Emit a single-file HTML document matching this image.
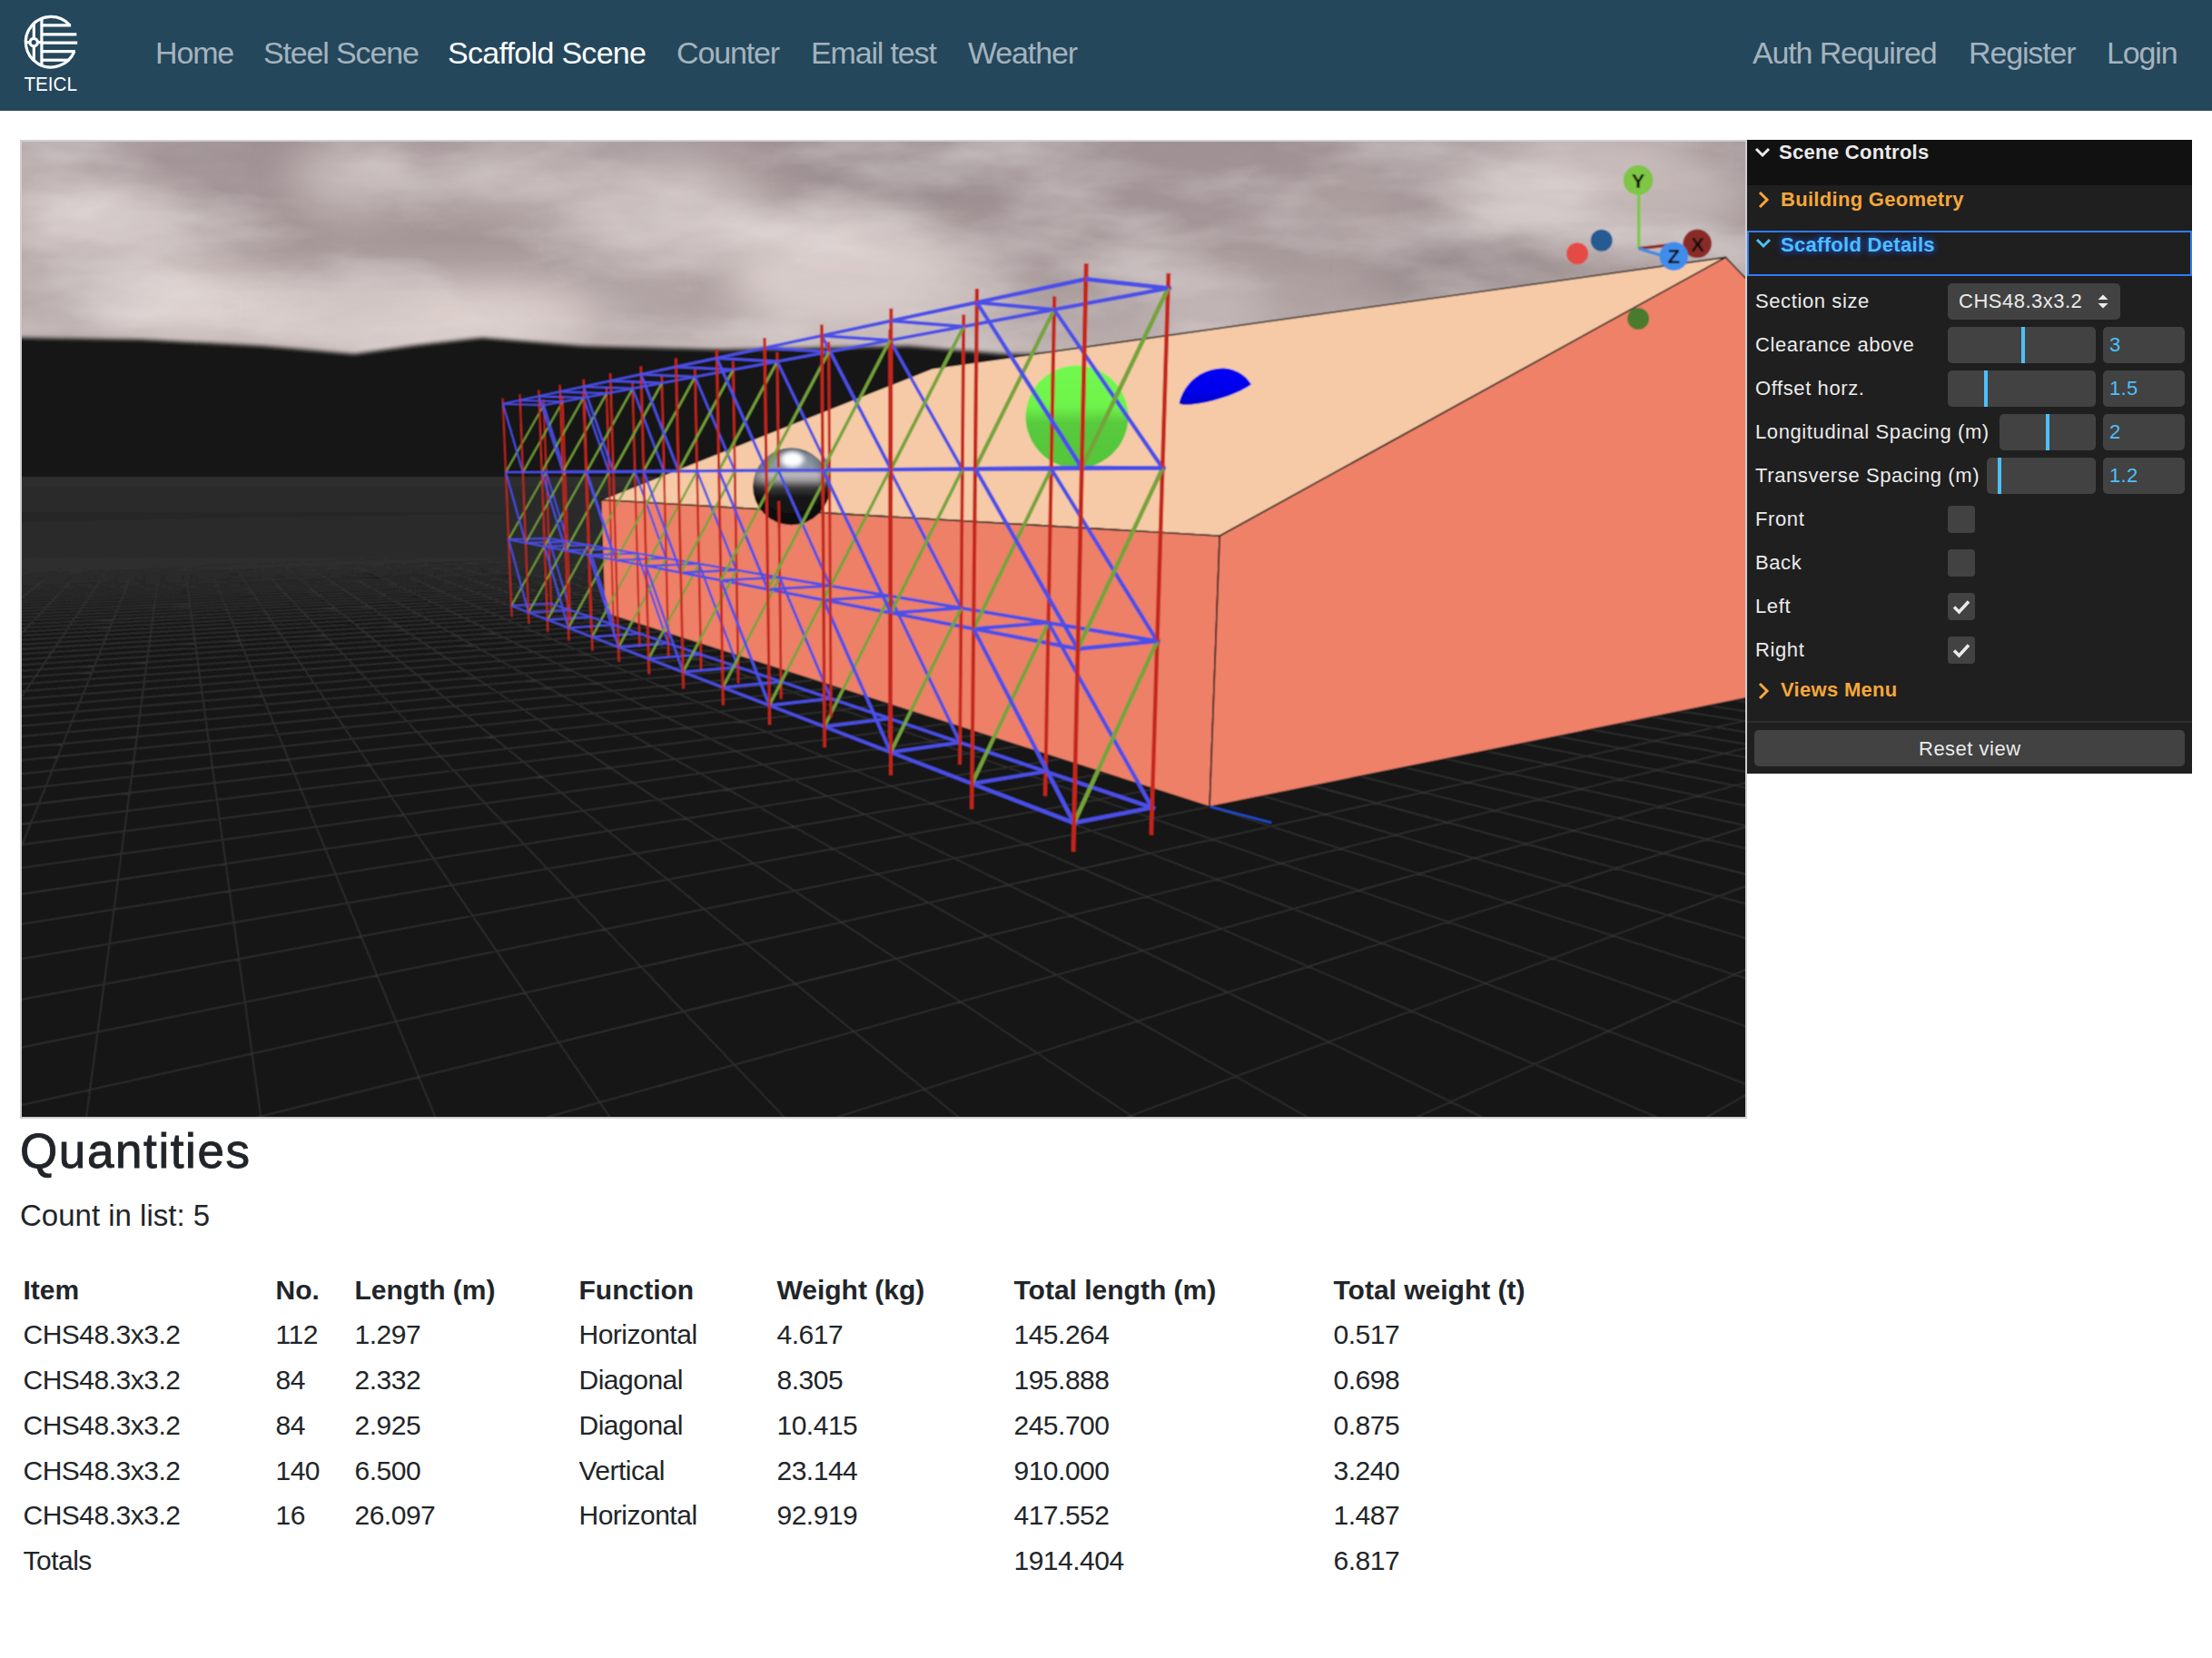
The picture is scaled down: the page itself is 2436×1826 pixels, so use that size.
<!DOCTYPE html>
<html><head><meta charset="utf-8">
<style>
html,body{margin:0;padding:0;background:#fff;}
body{width:2436px;height:1826px;position:relative;overflow:hidden;font-family:"Liberation Sans",sans-serif;}
.abs{position:absolute;white-space:nowrap;}
#hdr{position:absolute;left:0;top:0;width:2436px;height:122px;background:#24475c;}
.nav{position:absolute;top:41px;font-size:34px;line-height:34px;color:#a4b3bd;letter-spacing:-1.15px;}
.nav.act{color:#fff;}
#canvas{position:absolute;left:22px;top:154px;width:1898px;height:1074px;border:2px solid #cfcfcf;background:#161616;overflow:hidden;}
#gui{position:absolute;left:1924px;top:154px;width:490px;height:698px;background:#1f1f1f;color:#ebebeb;}
.gt{position:absolute;white-space:nowrap;font-size:22px;line-height:22px;}
.row{position:absolute;left:0;width:490px;height:40px;}
.lbl{position:absolute;left:8px;top:9px;font-size:22px;line-height:22px;color:#ebebeb;}
.wid{position:absolute;top:0;height:40px;background:#424242;border-radius:4px;}
.num{position:absolute;left:2316px;}
.chk{position:absolute;left:221px;width:30px;height:30px;background:#424242;border-radius:4px;}
h1{position:absolute;left:22px;top:1238px;margin:0;font-size:53px;line-height:60px;font-weight:normal;color:#212529;letter-spacing:1.6px;-webkit-text-stroke:0.9px #212529;}
#count{position:absolute;left:22px;top:1322px;font-size:33px;line-height:33px;color:#212529;}
.tc{position:absolute;font-size:30px;line-height:30px;color:#212529;white-space:nowrap;}
.th{font-weight:bold;}
</style></head><body>
<div id="hdr">
  <svg class="abs" style="left:0;top:0" width="120" height="120" viewBox="0 0 120 120">
<g stroke="#fff" stroke-width="3.2" fill="none">
<path d="M76.94,27.80 A27.8,27.8 0 1 0 81.84,56.70"/>
<line x1="45.9" y1="20.34" x2="45.9" y2="72.06"/>
<line x1="37.3" y1="26.22" x2="37.3" y2="41.5"/>
<line x1="37.3" y1="51.5" x2="37.3" y2="66.18"/>
<circle cx="37.2" cy="46.6" r="4.2"/>
<line x1="29.30" y1="46.6" x2="33" y2="46.6"/>
<line x1="41.4" y1="46.6" x2="45.9" y2="46.6"/>
<line x1="45.9" y1="27.8" x2="78.14" y2="27.8"/>
<line x1="45.9" y1="37.8" x2="84.3" y2="37.8"/>
<line x1="45.9" y1="47.2" x2="85.2" y2="47.2"/>
<line x1="45.9" y1="56.7" x2="82.84" y2="56.7"/>
<line x1="45.9" y1="66.2" x2="74.91" y2="66.2"/>
</g>
<text x="26.5" y="100" font-family="Liberation Sans, sans-serif" font-size="21.5" fill="#fff" textLength="58.5" lengthAdjust="spacingAndGlyphs">TEICL</text>
</svg>
  <div class="nav" style="left:171px">Home</div>
  <div class="nav" style="left:290px">Steel Scene</div>
  <div class="nav act" style="left:493px;letter-spacing:-0.7px">Scaffold Scene</div>
  <div class="nav" style="left:745px">Counter</div>
  <div class="nav" style="left:893px">Email test</div>
  <div class="nav" style="left:1066px">Weather</div>
  <div class="nav" style="left:1930px">Auth Required</div>
  <div class="nav" style="left:2168px">Register</div>
  <div class="nav" style="left:2320px">Login</div>
</div>
<div id="canvas">
<svg width="1898" height="1074" viewBox="24 156 1898 1074" style="position:absolute;left:0;top:0;display:block">
<defs>
<linearGradient id="skyg" x1="0" y1="0" x2="0" y2="1">
 <stop offset="0" stop-color="#9f9193"/>
 <stop offset="0.4" stop-color="#a99b9c"/>
 <stop offset="0.62" stop-color="#bcafae"/>
 <stop offset="1" stop-color="#cdc0bd"/>
</linearGradient>
<linearGradient id="hband" x1="0" y1="0" x2="0" y2="1">
 <stop offset="0" stop-color="#2e2e2e" stop-opacity="1"/>
 <stop offset="0.3" stop-color="#2b2b2b" stop-opacity="0.9"/>
 <stop offset="0.65" stop-color="#262626" stop-opacity="0.45"/>
 <stop offset="1" stop-color="#1e1e1e" stop-opacity="0"/>
</linearGradient>
<filter id="blur8" x="-50%" y="-50%" width="200%" height="200%"><feGaussianBlur stdDeviation="14"/></filter>
<filter id="blur20" x="-50%" y="-50%" width="200%" height="200%"><feGaussianBlur stdDeviation="24"/></filter>
<filter id="blur2" x="-10%" y="-50%" width="120%" height="200%"><feGaussianBlur stdDeviation="2.2"/></filter>
<filter id="cloudtex" x="24" y="156" width="1898" height="380" filterUnits="userSpaceOnUse">
 <feTurbulence type="fractalNoise" baseFrequency="0.0045 0.014" numOctaves="5" seed="7" result="n"/>
 <feColorMatrix in="n" type="matrix" values="0 0 0 0 0.90  0 0 0 0 0.85  0 0 0 0 0.84  2.6 0 0 0 -1.05" result="c"/>
 <feComposite in="c" in2="SourceGraphic" operator="in"/>
</filter>
<filter id="darktex" x="24" y="156" width="1898" height="380" filterUnits="userSpaceOnUse">
 <feTurbulence type="fractalNoise" baseFrequency="0.006 0.02" numOctaves="4" seed="3" result="n"/>
 <feColorMatrix in="n" type="matrix" values="0 0 0 0 0.55  0 0 0 0 0.49  0 0 0 0 0.50  2.4 0 0 0 -1.2" result="c"/>
 <feComposite in="c" in2="SourceGraphic" operator="in"/>
</filter>
<clipPath id="cv"><rect x="24" y="156" width="1898" height="1074"/></clipPath>
</defs>
<defs><clipPath id="floorclip"><rect x="24" y="525" width="1898" height="705"/></clipPath></defs>
<defs><filter id="soft" x="24" y="156" width="1898" height="1074" filterUnits="userSpaceOnUse"><feConvolveMatrix order="3" kernelMatrix="1 2 1 2 4 2 1 2 1" divisor="16" preserveAlpha="true"/></filter></defs>
<g filter="url(#soft)">
<rect x="24" y="156" width="1898" height="380" fill="url(#skyg)"/>
<ellipse cx="100" cy="240" rx="110" ry="45" fill="#d8cccb" opacity="0.85" filter="url(#blur20)"/>
<ellipse cx="215" cy="330" rx="120" ry="50" fill="#ddd1cf" opacity="0.9" filter="url(#blur20)"/>
<ellipse cx="395" cy="195" rx="75" ry="38" fill="#d3c7c6" opacity="0.8" filter="url(#blur20)"/>
<ellipse cx="570" cy="200" rx="95" ry="30" fill="#d3c7c6" opacity="0.75" filter="url(#blur20)"/>
<ellipse cx="480" cy="345" rx="190" ry="38" fill="#e2d6d3" opacity="0.9" filter="url(#blur20)"/>
<ellipse cx="740" cy="235" rx="110" ry="60" fill="#d2c6c5" opacity="0.8" filter="url(#blur20)"/>
<ellipse cx="930" cy="300" rx="130" ry="70" fill="#ddd1cf" opacity="0.9" filter="url(#blur20)"/>
<ellipse cx="1060" cy="320" rx="60" ry="40" fill="#d6cac8" opacity="0.7" filter="url(#blur20)"/>
<ellipse cx="1330" cy="335" rx="70" ry="30" fill="#cfc3c2" opacity="0.75" filter="url(#blur20)"/>
<ellipse cx="1760" cy="215" rx="170" ry="55" fill="#c9bdbc" opacity="0.8" filter="url(#blur20)"/>
<ellipse cx="1770" cy="170" rx="100" ry="20" fill="#dacdcc" opacity="0.8" filter="url(#blur20)"/>
<ellipse cx="1480" cy="230" rx="70" ry="40" fill="#b6a9a9" opacity="0.5" filter="url(#blur20)"/>
<ellipse cx="285" cy="258" rx="65" ry="30" fill="#9f9090" opacity="0.55" filter="url(#blur20)"/>
<ellipse cx="480" cy="262" rx="80" ry="28" fill="#a39494" opacity="0.5" filter="url(#blur20)"/>
<ellipse cx="1000" cy="190" rx="110" ry="28" fill="#8b7f81" opacity="0.6" filter="url(#blur20)"/>
<ellipse cx="1620" cy="300" rx="110" ry="35" fill="#8c8082" opacity="0.55" filter="url(#blur20)"/>
<ellipse cx="1180" cy="270" rx="110" ry="45" fill="#a19394" opacity="0.45" filter="url(#blur20)"/>
<rect x="24" y="156" width="1898" height="240" fill="#fff" filter="url(#cloudtex)" opacity="0.42"/>
<rect x="24" y="156" width="1898" height="240" fill="#fff" filter="url(#darktex)" opacity="0.3"/>
<path d="M -30,371 L 24,372 L 156,374 L 289,381 L 390,390 L 460,380 L 531,372 L 642,381 L 796,385 L 1000,381 L 1106,390 L 1300,392 L 1922,395 L 1980,396 L 1980,526 L -30,526 Z" fill="#151515" filter="url(#blur2)"/>
<rect x="24" y="400" width="1898" height="126" fill="#151515"/>
<rect x="24" y="525" width="1898" height="705" fill="#161616"/>
<g clip-path="url(#floorclip)"><path d="M-204146.8 7457.5L-2742.6 622.4M-202263.3 7457.5L-2689.2 621.5M-200379.9 7457.5L-2636.7 620.6M-198496.4 7457.5L-2585.2 619.8M-196613.0 7457.5L-2534.6 618.9M-194729.5 7457.5L-2484.9 618.1M-192846.1 7457.5L-2436.0 617.2M-190962.6 7457.5L-2388.0 616.4M-189079.2 7457.5L-2340.8 615.6M-187195.7 7457.5L-2294.4 614.8M-185312.3 7457.5L-2248.8 614.1M-183428.8 7457.5L-2203.9 613.3M-181545.4 7457.5L-2159.8 612.6M-179661.9 7457.5L-2116.4 611.8M-177778.4 7457.5L-2073.8 611.1M-175895.0 7457.5L-2031.8 610.4M-174011.5 7457.5L-1990.4 609.7M-172128.1 7457.5L-1949.8 609.0M-170244.6 7457.5L-1909.7 608.3M-168361.2 7457.5L-1870.3 607.7M-166477.7 7457.5L-1831.5 607.0M-164594.3 7457.5L-1793.3 606.4M-162710.8 7457.5L-1755.7 605.7M-160827.4 7457.5L-1718.7 605.1M-158943.9 7457.5L-1682.2 604.5M-157060.5 7457.5L-1646.2 603.9M-155177.0 7457.5L-1610.8 603.3M-153293.5 7457.5L-1575.9 602.7M-151410.1 7457.5L-1541.5 602.1M-149526.6 7457.5L-1507.7 601.5M-147643.2 7457.5L-1474.3 601.0M247409.9 7457.5L213678.7 6499.9M-145759.7 7457.5L-1441.3 600.4M244280.7 7457.5L111661.8 3643.8M-143876.3 7457.5L-1408.9 599.9M241151.5 7457.5L75617.9 2634.7M-141992.8 7457.5L-1376.9 599.3M238022.3 7457.5L57187.8 2118.7M-140109.4 7457.5L-1345.3 598.8M234893.1 7457.5L45995.6 1805.4M-138225.9 7457.5L-1314.2 598.3M231763.8 7457.5L38477.3 1594.9M-136342.5 7457.5L-1283.5 597.7M228634.6 7457.5L33079.1 1443.7M-134459.0 7457.5L-1253.3 597.2M225505.4 7457.5L29014.9 1330.0M-132575.6 7457.5L-1223.4 596.7M222376.2 7457.5L25844.7 1241.2M-130692.1 7457.5L-1194.0 596.2M219247.0 7457.5L23302.8 1170.0M-128808.7 7457.5L-1164.9 595.7M216117.8 7457.5L21219.1 1111.7M-126925.2 7457.5L-1136.3 595.2M212988.5 7457.5L19480.0 1063.0M-125041.7 7457.5L-1108.0 594.8M209859.3 7457.5L18006.6 1021.8M-123158.3 7457.5L-1080.1 594.3M206730.1 7457.5L16742.3 986.4M-121274.8 7457.5L-1052.5 593.8M203600.9 7457.5L15645.6 955.7M-119391.4 7457.5L-1025.3 593.4M200471.7 7457.5L14685.1 928.8M-117507.9 7457.5L-998.5 592.9M197342.5 7457.5L13837.0 905.0M-115624.5 7457.5L-972.0 592.5M194213.2 7457.5L13082.7 883.9M-113741.0 7457.5L-945.8 592.0M191084.0 7457.5L12407.4 865.0M-111857.6 7457.5L-920.0 591.6M187954.8 7457.5L11799.3 848.0M-109974.1 7457.5L-894.5 591.1M184825.6 7457.5L11248.9 832.6M-108090.7 7457.5L-869.3 590.7M181696.4 7457.5L10748.3 818.5M-106207.2 7457.5L-844.4 590.3M178567.2 7457.5L10291.0 805.7M-104323.8 7457.5L-819.9 589.9M175438.0 7457.5L9871.8 794.0M-102440.3 7457.5L-795.6 589.5M172308.7 7457.5L9485.9 783.2M-100556.8 7457.5L-771.6 589.1M169179.5 7457.5L9129.6 773.2M-98673.4 7457.5L-748.0 588.7M166050.3 7457.5L8799.6 764.0M-96789.9 7457.5L-724.6 588.3M162921.1 7457.5L8493.1 755.4M-94906.5 7457.5L-701.5 587.9M159791.9 7457.5L8207.7 747.4M-93023.0 7457.5L-678.6 587.5M156662.7 7457.5L7941.2 740.0M-91139.6 7457.5L-656.1 587.1M153533.4 7457.5L7691.9 733.0M-89256.1 7457.5L-633.8 586.7M150404.2 7457.5L7458.1 726.4M-87372.7 7457.5L-611.7 586.4M147275.0 7457.5L7238.5 720.3M-85489.2 7457.5L-589.9 586.0M144145.8 7457.5L7031.7 714.5M-83605.8 7457.5L-568.4 585.6M141016.6 7457.5L6836.7 709.0M-81722.3 7457.5L-547.1 585.3M137887.4 7457.5L6652.5 703.9M-79838.9 7457.5L-526.1 584.9M134758.1 7457.5L6478.3 699.0M-77955.4 7457.5L-505.3 584.6M131628.9 7457.5L6313.2 694.4M-76071.9 7457.5L-484.7 584.2M128499.7 7457.5L6156.6 690.0M-74188.5 7457.5L-464.4 583.9M125370.5 7457.5L6007.7 685.8M-72305.0 7457.5L-444.3 583.5M122241.3 7457.5L5866.1 681.9M-70421.6 7457.5L-424.4 583.2M119112.1 7457.5L5731.3 678.1M-68538.1 7457.5L-404.7 582.9M115982.8 7457.5L5602.6 674.5M-66654.7 7457.5L-385.3 582.5M112853.6 7457.5L5479.9 671.0M-64771.2 7457.5L-366.0 582.2M109724.4 7457.5L5362.5 667.8M-62887.8 7457.5L-347.0 581.9M106595.2 7457.5L5250.3 664.6M-61004.3 7457.5L-328.2 581.6M103466.0 7457.5L5142.8 661.6M-59120.9 7457.5L-309.5 581.2M100336.8 7457.5L5039.8 658.7M-57237.4 7457.5L-291.1 580.9M97207.6 7457.5L4941.0 656.0M-55354.0 7457.5L-272.9 580.6M94078.3 7457.5L4846.2 653.3M-53470.5 7457.5L-254.9 580.3M90949.1 7457.5L4755.0 650.8M-51587.1 7457.5L-237.0 580.0M87819.9 7457.5L4667.4 648.3M-49703.6 7457.5L-219.4 579.7M84690.7 7457.5L4583.0 645.9M-47820.1 7457.5L-201.9 579.4M81561.5 7457.5L4501.8 643.7M-45936.7 7457.5L-184.6 579.1M78432.3 7457.5L4423.5 641.5M-44053.2 7457.5L-167.5 578.8M75303.0 7457.5L4348.0 639.4M-42169.8 7457.5L-150.5 578.6M72173.8 7457.5L4275.2 637.3M-40286.3 7457.5L-133.8 578.3M69044.6 7457.5L4204.9 635.3M-38402.9 7457.5L-117.2 578.0M65915.4 7457.5L4136.9 633.4M-36519.4 7457.5L-100.8 577.7M62786.2 7457.5L4071.2 631.6M-34636.0 7457.5L-84.5 577.4M59657.0 7457.5L4007.7 629.8M-32752.5 7457.5L-68.4 577.2M56527.7 7457.5L3946.2 628.1M-30869.1 7457.5L-52.5 576.9M53398.5 7457.5L3886.6 626.4M-28985.6 7457.5L-36.7 576.6M50269.3 7457.5L3829.0 624.8M-27102.2 7457.5L-21.0 576.4M47140.1 7457.5L3773.0 623.3M-25218.7 7457.5L-5.6 576.1M44010.9 7457.5L3718.8 621.7M-23335.2 7457.5L9.8 575.8M40881.7 7457.5L3666.2 620.3M-21451.8 7457.5L24.9 575.6M37752.4 7457.5L3615.1 618.8M-19568.3 7457.5L40.0 575.3M34623.2 7457.5L3565.6 617.5M-17684.9 7457.5L54.8 575.1M31494.0 7457.5L3517.4 616.1M-15801.4 7457.5L69.6 574.8M28364.8 7457.5L3470.6 614.8M-13918.0 7457.5L84.2 574.6M25235.6 7457.5L3425.1 613.5M-12034.5 7457.5L98.6 574.3M22106.4 7457.5L3380.8 612.3M-10151.1 7457.5L113.0 574.1M18977.1 7457.5L3337.7 611.1M-8267.6 7457.5L127.2 573.9M15847.9 7457.5L3295.8 609.9M-6384.2 7457.5L141.2 573.6M12718.7 7457.5L3255.0 608.8M-4500.7 7457.5L155.1 573.4M9589.5 7457.5L3215.2 607.6M-2617.3 7457.5L168.9 573.1M6460.3 7457.5L3176.5 606.6M-733.8 7457.5L182.6 572.9M3331.1 7457.5L3138.7 605.5M1149.7 7457.5L196.2 572.7M201.9 7457.5L3101.9 604.5M3033.1 7457.5L209.6 572.5M-2927.4 7457.5L3065.9 603.5M4916.6 7457.5L222.9 572.2M-6056.6 7457.5L3030.9 602.5M6800.0 7457.5L236.1 572.0M-9185.8 7457.5L2996.7 601.5M8683.5 7457.5L249.1 571.8M-12315.0 7457.5L2963.3 600.6M10566.9 7457.5L262.1 571.6M-15444.2 7457.5L2930.7 599.7M12450.4 7457.5L274.9 571.4M-18573.4 7457.5L2898.9 598.8M14333.8 7457.5L287.6 571.1M-21702.7 7457.5L2867.8 597.9M16217.3 7457.5L300.2 570.9M-24831.9 7457.5L2837.4 597.1M18100.7 7457.5L312.7 570.7M-27961.1 7457.5L2807.6 596.2M19984.2 7457.5L325.1 570.5M-31090.3 7457.5L2778.6 595.4M21867.6 7457.5L337.4 570.3M-34219.5 7457.5L2750.1 594.6M23751.1 7457.5L349.5 570.1M-37348.7 7457.5L2722.3 593.8M25634.5 7457.5L361.6 569.9M-40478.0 7457.5L2695.1 593.1M27518.0 7457.5L373.5 569.7M-43607.2 7457.5L2668.5 592.3M29401.5 7457.5L385.4 569.5M-46736.4 7457.5L2642.4 591.6M31284.9 7457.5L397.2 569.3M-49865.6 7457.5L2616.9 590.9M33168.4 7457.5L408.8 569.1M-52994.8 7457.5L2591.9 590.2M35051.8 7457.5L420.4 568.9M-56124.0 7457.5L2567.4 589.5M36935.3 7457.5L431.8 568.7M-59253.3 7457.5L2543.4 588.8M38818.7 7457.5L443.2 568.5M-62382.5 7457.5L2519.9 588.2M40702.2 7457.5L454.4 568.3M-65511.7 7457.5L2496.8 587.5M42585.6 7457.5L465.6 568.1M-68640.9 7457.5L2474.2 586.9M44469.1 7457.5L476.7 567.9M-71770.1 7457.5L2452.1 586.3M46352.5 7457.5L487.7 567.8M-74899.3 7457.5L2430.3 585.7M48236.0 7457.5L498.6 567.6M-78028.5 7457.5L2409.0 585.1M50119.4 7457.5L509.4 567.4M-81157.8 7457.5L2388.1 584.5M52002.9 7457.5L520.1 567.2M-84287.0 7457.5L2367.5 583.9M53886.4 7457.5L530.7 567.0M-87416.2 7457.5L2347.4 583.3M55769.8 7457.5L541.3 566.8M-90545.4 7457.5L2327.6 582.8M57653.3 7457.5L551.8 566.7M-93674.6 7457.5L2308.2 582.2M59536.7 7457.5L562.1 566.5M-96803.8 7457.5L2289.1 581.7M61420.2 7457.5L572.4 566.3M-99933.1 7457.5L2270.4 581.2M63303.6 7457.5L582.6 566.1M-103062.3 7457.5L2252.0 580.7M65187.1 7457.5L592.8 566.0M-106191.5 7457.5L2233.9 580.2M67070.5 7457.5L602.8 565.8M-109320.7 7457.5L2216.1 579.7M68954.0 7457.5L612.8 565.6M-112449.9 7457.5L2198.7 579.2M70837.4 7457.5L622.7 565.5M-115579.1 7457.5L2181.5 578.7M72720.9 7457.5L632.5 565.3M-118708.4 7457.5L2164.6 578.2M74604.3 7457.5L642.2 565.1M-121837.6 7457.5L2148.1 577.8M76487.8 7457.5L651.9 565.0M-124966.8 7457.5L2131.7 577.3M78371.3 7457.5L661.5 564.8M-128096.0 7457.5L2115.7 576.9M80254.7 7457.5L671.0 564.7M-131225.2 7457.5L2099.9 576.4M82138.2 7457.5L680.5 564.5M-134354.4 7457.5L2084.4 576.0M84021.6 7457.5L689.8 564.3M-137483.7 7457.5L2069.1 575.6M85905.1 7457.5L699.1 564.2M-140612.9 7457.5L2054.1 575.1M87788.5 7457.5L708.4 564.0M-143742.1 7457.5L2039.3 574.7M89672.0 7457.5L717.5 563.9M-146871.3 7457.5L2024.8 574.3M91555.4 7457.5L726.6 563.7M-150000.5 7457.5L2010.4 573.9M93438.9 7457.5L735.6 563.6M-153129.7 7457.5L1996.3 573.5M95322.3 7457.5L744.6 563.4M-156259.0 7457.5L1982.4 573.1M97205.8 7457.5L753.5 563.3M-159388.2 7457.5L1968.7 572.7M99089.2 7457.5L762.3 563.1M-162517.4 7457.5L1955.3 572.4M100972.7 7457.5L771.1 563.0M-165646.6 7457.5L1942.0 572.0M102856.1 7457.5L779.8 562.8M-168775.8 7457.5L1928.9 571.6M104739.6 7457.5L788.4 562.7M-171905.0 7457.5L1916.1 571.3M106623.1 7457.5L797.0 562.5M-175034.2 7457.5L1903.4 570.9M108506.5 7457.5L805.5 562.4M-178163.5 7457.5L1890.9 570.6M110390.0 7457.5L813.9 562.2M-181292.7 7457.5L1878.5 570.2M112273.4 7457.5L822.3 562.1M-184421.9 7457.5L1866.4 569.9M114156.9 7457.5L830.6 561.9M-187551.1 7457.5L1854.4 569.5M116040.3 7457.5L838.9 561.8M-190680.3 7457.5L1842.6 569.2M117923.8 7457.5L847.1 561.7M-193809.5 7457.5L1831.0 568.9M119807.2 7457.5L855.2 561.5M-196938.8 7457.5L1819.5 568.6M121690.7 7457.5L863.3 561.4M-200068.0 7457.5L1808.2 568.3M123574.1 7457.5L871.3 561.3M-203197.2 7457.5L1797.0 567.9M125457.6 7457.5L879.3 561.1M-117273.7 4509.3L1786.0 567.6M127341.0 7457.5L887.2 561.0M-72752.1 2998.4L1775.2 567.3M129224.5 7457.5L895.1 560.9M-52704.1 2318.0L1764.5 567.0M131108.0 7457.5L902.9 560.7M-41300.6 1931.0L1753.9 566.7M132991.4 7457.5L910.7 560.6M-33942.0 1681.2L1743.5 566.4M134874.9 7457.5L918.4 560.5M-28800.5 1506.8L1733.2 566.2M136758.3 7457.5L926.0 560.3M-25005.2 1378.0L1723.0 565.9M138641.8 7457.5L933.6 560.2M-22088.6 1279.0L1713.0 565.6M140525.2 7457.5L941.1 560.1M-19777.2 1200.5L1703.1 565.3M142408.7 7457.5L948.6 560.0M-17900.4 1136.8L1693.4 565.0M144292.1 7457.5L956.1 559.8M-16346.1 1084.1L1683.7 564.8M146175.6 7457.5L963.5 559.7M-15037.7 1039.7L1674.2 564.5M148059.0 7457.5L970.8 559.6M-13921.2 1001.8L1664.8 564.2M149942.5 7457.5L978.1 559.5M-12957.3 969.1L1655.6 564.0M151825.9 7457.5L985.3 559.3M-12116.6 940.6L1646.4 563.7M153709.4 7457.5L992.5 559.2M-11377.0 915.5L1637.4 563.5M155592.9 7457.5L999.7 559.1M-10721.3 893.2L1628.4 563.2M157476.3 7457.5L1006.8 559.0M-10135.9 873.3L1619.6 563.0M159359.8 7457.5L1013.8 558.8M-9610.1 855.5L1610.9 562.7M161243.2 7457.5L1020.8 558.7M-9135.3 839.4L1602.3 562.5M163126.7 7457.5L1027.8 558.6M-8704.4 824.8L1593.8 562.2M165010.1 7457.5L1034.7 558.5M-8311.5 811.4L1585.4 562.0M166893.6 7457.5L1041.6 558.4M-7951.9 799.2L1577.1 561.8M168777.0 7457.5L1048.4 558.3M-7621.5 788.0L1568.8 561.5M170660.5 7457.5L1055.2 558.1M-7316.8 777.7L1560.7 561.3M172543.9 7457.5L1061.9 558.0M-7035.1 768.1L1552.7 561.1M174427.4 7457.5L1068.6 557.9M-6773.7 759.2L1544.8 560.9M176310.8 7457.5L1075.2 557.8M-6530.5 751.0L1537.0 560.7M178194.3 7457.5L1081.8 557.7M-6303.8 743.3L1529.2 560.4M180077.7 7457.5L1088.4 557.6M-6091.9 736.1L1521.6 560.2M181961.2 7457.5L1094.9 557.5M-5893.3 729.4L1514.0 560.0M183844.7 7457.5L1101.4 557.4M-5707.0 723.0L1506.5 559.8M185728.1 7457.5L1107.8 557.3M-5531.7 717.1L1499.1 559.6M187611.6 7457.5L1114.2 557.1M-5366.5 711.5L1491.8 559.4M189495.0 7457.5L1120.6 557.0M-5210.6 706.2L1484.6 559.2M191378.5 7457.5L1126.9 556.9M-5063.3 701.2L1477.4 559.0M193261.9 7457.5L1133.2 556.8M-4923.7 696.4L1470.4 558.8M195145.4 7457.5L1139.4 556.7M-4791.4 692.0L1463.4 558.6M197028.8 7457.5L1145.6 556.6M-4665.7 687.7L1456.4 558.4M198912.3 7457.5L1151.8 556.5M-4546.3 683.6L1449.6 558.2M200795.7 7457.5L1157.9 556.4M-4432.5 679.8L1442.8 558.0M202679.2 7457.5L1164.0 556.3M-4324.1 676.1L1436.1 557.8M204562.6 7457.5L1170.1 556.2M-4220.7 672.6L1429.5 557.6M206446.1 7457.5L1176.1 556.1M-4121.9 669.2L1422.9 557.5M208329.6 7457.5L1182.0 556.0M-4027.4 666.0L1416.4 557.3M210213.0 7457.5L1188.0 555.9M-3937.0 663.0L1410.0 557.1M212096.5 7457.5L1193.9 555.8M-3850.4 660.0L1403.7 556.9M213979.9 7457.5L1199.8 555.7M-3767.4 657.2L1397.4 556.7M215863.4 7457.5L1205.6 555.6M-3687.7 654.5L1391.2 556.6M217746.8 7457.5L1211.4 555.5M-3611.1 651.9L1385.0 556.4M219630.3 7457.5L1217.1 555.4M-3537.5 649.4L1378.9 556.2M221513.7 7457.5L1222.9 555.3M-3466.7 647.0L1372.9 556.1M223397.2 7457.5L1228.6 555.2M-3398.5 644.7L1366.9 555.9M225280.6 7457.5L1234.2 555.1M-3332.9 642.5L1361.0 555.7M227164.1 7457.5L1239.9 555.0M-3269.6 640.3L1355.1 555.6M229047.5 7457.5L1245.4 554.9M-3208.5 638.2L1349.3 555.4M230931.0 7457.5L1251.0 554.8M-3149.5 636.2L1343.6 555.2M232814.4 7457.5L1256.5 554.7M-3092.6 634.3L1337.9 555.1M234697.9 7457.5L1262.0 554.6M-3037.6 632.4L1332.3 554.9M236581.4 7457.5L1267.5 554.6M-2984.4 630.6L1326.7 554.8M238464.8 7457.5L1272.9 554.5M-2932.9 628.9L1321.2 554.6M240348.3 7457.5L1278.3 554.4M-2883.0 627.2L1315.7 554.5M242231.7 7457.5L1283.7 554.3M-2834.8 625.6L1310.3 554.3M244115.2 7457.5L1289.0 554.2M-2788.0 624.0L1304.9 554.2M245998.6 7457.5L1294.3 554.1M-2742.6 622.4L1299.6 554.0M247882.1 7457.5L1299.6 554.0" stroke="#313131" stroke-width="1.5" fill="none"/></g>
<rect x="24" y="525" width="1898" height="125" fill="url(#hband)"/>
<polygon points="1343.2,590.2 661.7,550.5 1026.2,405.8 1900.5,283.4" fill="#f6caa6" stroke="#1e1e1e" stroke-width="1.6" stroke-linejoin="round"/>
<polygon points="1332.1,888.5 665.6,675.3 661.7,550.5 1343.2,590.2" fill="#ee8068" stroke="#1e1e1e" stroke-width="1.6"/>
<polygon points="1332.1,888.5 1343.2,590.2 1900.5,283.4 2162.9,559.5 2143.2,724.2" fill="#ef8169" stroke="#1e1e1e" stroke-width="1.6"/>
<defs>
<linearGradient id="silverg" x1="0" y1="0" x2="0" y2="1">
 <stop offset="0" stop-color="#6a7383"/>
 <stop offset="0.1" stop-color="#97a1b1"/>
 <stop offset="0.27" stop-color="#8a94a4"/>
 <stop offset="0.35" stop-color="#bcb9bc"/>
 <stop offset="0.42" stop-color="#9a989a"/>
 <stop offset="0.52" stop-color="#3a3a3a"/>
 <stop offset="0.64" stop-color="#171717"/>
 <stop offset="1" stop-color="#111111"/>
</linearGradient>
<radialGradient id="silverr" cx="0.5" cy="0.45" r="0.55">
 <stop offset="0.6" stop-color="#000" stop-opacity="0"/>
 <stop offset="1" stop-color="#000" stop-opacity="0.45"/>
</radialGradient>
<linearGradient id="greeng" x1="0" y1="0" x2="0" y2="1">
 <stop offset="0" stop-color="#72f94e"/>
 <stop offset="0.4" stop-color="#6ef34b"/>
 <stop offset="0.56" stop-color="#58ca3c"/>
 <stop offset="1" stop-color="#56c53a"/>
</linearGradient>
<linearGradient id="blueg" x1="0" y1="0" x2="0" y2="1">
 <stop offset="0" stop-color="#0000f4"/>
 <stop offset="0.6" stop-color="#0000ee"/>
 <stop offset="1" stop-color="#0000c8"/>
</linearGradient>
<filter id="blur1" x="-50%" y="-50%" width="200%" height="200%"><feGaussianBlur stdDeviation="2.5"/></filter>
</defs>
<circle cx="1186" cy="459" r="56.5" fill="url(#greeng)"/>
<path d="M1298.5,444 C1304,421 1324,405.5 1347,405.5 C1361,406 1372,413 1378,423.5 C1366,432 1342,441 1320,444.5 C1309,446 1300,446.5 1298.5,444 Z" fill="url(#blueg)"/>
<path d="M1332.6,888.3 L1400,906" stroke="#2050e0" stroke-width="2" fill="none"/>

<polygon points="563.2,668.1 607.0,665.6 606.9,663.9 563.1,666.3" fill="#4b4fe6"/>
<polygon points="608.3,676.7 599.5,440.1 597.7,440.2 606.6,676.8" fill="#c4261c"/>
<polygon points="563.9,667.6 605.1,593.4 603.5,592.5 562.4,666.8" fill="#74a33b"/>
<polygon points="560.1,595.1 604.3,593.8 604.3,592.1 560.1,593.3" fill="#4b4fe6"/>
<polygon points="560.9,594.6 602.3,520.6 600.8,519.7 559.3,593.8" fill="#74a33b"/>
<polygon points="557.0,521.0 601.6,521.0 601.6,519.3 557.0,519.2" fill="#4b4fe6"/>
<polygon points="557.8,520.5 599.6,446.6 598.1,445.8 556.2,519.6" fill="#74a33b"/>
<polygon points="603.5,593.2 626.8,672.0 628.5,671.5 605.1,592.7" fill="#4b4fe6"/>
<polygon points="564.5,679.4 554.5,438.6 552.7,438.7 562.8,679.4" fill="#c4261c"/>
<polygon points="553.8,445.8 598.8,447.1 598.9,445.3 553.9,444.0" fill="#4b4fe6"/>
<polygon points="600.8,520.4 624.1,596.7 625.9,596.2 602.4,519.9" fill="#4b4fe6"/>
<polygon points="598.0,446.5 621.4,520.3 623.2,519.7 599.7,445.9" fill="#4b4fe6"/>
<polygon points="559.3,594.4 581.1,674.7 582.9,674.2 561.0,594.0" fill="#4b4fe6"/>
<polygon points="556.2,520.3 578.0,598.1 579.8,597.6 557.9,519.8" fill="#4b4fe6"/>
<polygon points="582.0,675.4 627.7,672.7 627.6,670.9 581.9,673.6" fill="#4b4fe6"/>
<polygon points="629.0,684.3 620.3,435.9 618.4,436.0 627.2,684.4" fill="#c4261c"/>
<polygon points="553.0,445.1 574.9,520.2 576.7,519.7 554.7,444.6" fill="#4b4fe6"/>
<polygon points="582.8,674.9 625.8,596.9 624.2,596.0 581.2,674.0" fill="#74a33b"/>
<polygon points="579.0,598.7 625.0,597.4 625.0,595.6 578.9,596.9" fill="#4b4fe6"/>
<polygon points="579.7,598.3 623.1,520.4 621.5,519.5 578.1,597.4" fill="#74a33b"/>
<polygon points="575.8,520.9 622.3,520.9 622.3,519.1 575.8,519.0" fill="#4b4fe6"/>
<polygon points="576.7,520.4 620.4,442.8 618.8,441.9 575.0,519.5" fill="#74a33b"/>
<polygon points="583.4,687.2 573.4,434.3 571.5,434.4 581.6,687.3" fill="#c4261c"/>
<polygon points="572.7,441.8 619.5,443.3 619.6,441.4 572.7,439.9" fill="#4b4fe6"/>
<polygon points="602.9,683.5 650.5,680.5 650.4,678.6 602.8,681.6" fill="#4b4fe6"/>
<polygon points="651.9,692.7 643.3,431.3 641.3,431.3 650.0,692.8" fill="#c4261c"/>
<polygon points="603.7,683.0 648.7,600.8 647.0,599.9 602.0,682.1" fill="#74a33b"/>
<polygon points="599.8,602.8 647.9,601.3 647.8,599.4 599.8,600.8" fill="#4b4fe6"/>
<polygon points="600.6,602.3 646.1,520.3 644.4,519.4 598.9,601.3" fill="#74a33b"/>
<polygon points="596.7,520.8 645.2,520.8 645.2,518.9 596.7,518.8" fill="#4b4fe6"/>
<polygon points="597.6,520.3 643.4,438.5 641.7,437.6 595.8,519.3" fill="#74a33b"/>
<polygon points="647.0,600.6 674.9,688.4 676.8,687.8 648.8,600.0" fill="#4b4fe6"/>
<polygon points="604.3,695.9 594.3,429.5 592.3,429.5 602.4,696.0" fill="#c4261c"/>
<polygon points="593.5,437.4 642.5,439.0 642.6,437.1 593.6,435.4" fill="#4b4fe6"/>
<polygon points="644.3,520.1 672.3,604.9 674.2,604.3 646.1,519.5" fill="#4b4fe6"/>
<polygon points="641.6,438.3 669.7,520.0 671.7,519.3 643.5,437.7" fill="#4b4fe6"/>
<polygon points="598.9,602.1 625.0,691.8 627.0,691.2 600.7,601.5" fill="#4b4fe6"/>
<polygon points="595.8,520.1 622.0,606.6 624.0,606.0 597.6,519.5" fill="#4b4fe6"/>
<polygon points="626.1,692.5 675.9,689.1 675.7,687.1 625.9,690.4" fill="#4b4fe6"/>
<polygon points="677.2,702.0 668.9,426.1 666.8,426.2 675.2,702.1" fill="#c4261c"/>
<polygon points="592.6,436.7 618.9,519.9 620.9,519.3 594.5,436.1" fill="#4b4fe6"/>
<polygon points="626.9,692.0 674.2,605.1 672.4,604.1 625.1,691.0" fill="#74a33b"/>
<polygon points="623.0,607.3 673.3,605.6 673.2,603.6 623.0,605.2" fill="#4b4fe6"/>
<polygon points="623.9,606.8 671.6,520.2 669.8,519.2 622.1,605.8" fill="#74a33b"/>
<polygon points="619.9,520.6 670.7,520.7 670.7,518.6 619.9,518.6" fill="#4b4fe6"/>
<polygon points="620.8,520.1 669.0,433.7 667.2,432.7 619.0,519.1" fill="#74a33b"/>
<polygon points="627.5,705.6 617.6,424.1 615.5,424.1 625.5,705.7" fill="#c4261c"/>
<polygon points="616.8,432.4 668.0,434.3 668.1,432.2 616.8,430.3" fill="#4b4fe6"/>
<polygon points="652.0,702.5 704.2,698.8 704.0,696.7 651.9,700.4" fill="#4b4fe6"/>
<polygon points="705.5,712.4 697.6,420.3 695.4,420.4 703.4,712.5" fill="#c4261c"/>
<polygon points="652.9,702.0 702.6,609.9 700.7,608.9 651.0,701.0" fill="#74a33b"/>
<polygon points="649.0,612.4 701.7,610.5 701.6,608.3 648.9,610.2" fill="#4b4fe6"/>
<polygon points="649.9,611.8 700.1,520.0 698.2,519.0 648.0,610.7" fill="#74a33b"/>
<polygon points="646.0,520.5 699.2,520.5 699.2,518.4 646.0,518.3" fill="#4b4fe6"/>
<polygon points="646.9,519.9 697.6,428.4 695.7,427.4 645.0,518.9" fill="#74a33b"/>
<polygon points="700.6,609.7 734.8,708.9 736.9,708.1 702.7,609.1" fill="#4b4fe6"/>
<polygon points="653.5,716.5 643.8,418.0 641.5,418.1 651.4,716.5" fill="#c4261c"/>
<polygon points="642.9,426.9 696.6,429.0 696.7,426.8 642.9,424.7" fill="#4b4fe6"/>
<polygon points="698.2,519.8 732.5,615.2 734.7,614.4 700.2,519.1" fill="#4b4fe6"/>
<polygon points="695.7,428.3 730.2,519.7 732.3,518.8 697.7,427.5" fill="#4b4fe6"/>
<polygon points="647.9,611.6 680.0,713.1 682.2,712.4 650.0,610.9" fill="#4b4fe6"/>
<polygon points="644.9,519.7 677.2,617.3 679.4,616.5 647.0,519.0" fill="#4b4fe6"/>
<polygon points="681.2,713.9 735.9,709.6 735.8,707.4 681.1,711.6" fill="#4b4fe6"/>
<polygon points="737.4,724.1 729.9,413.8 727.6,413.8 735.1,724.1" fill="#c4261c"/>
<polygon points="641.8,426.2 674.3,519.6 676.5,518.8 643.9,425.4" fill="#4b4fe6"/>
<polygon points="682.2,713.3 734.6,615.3 732.6,614.3 680.1,712.2" fill="#74a33b"/>
<polygon points="678.3,618.1 733.6,615.9 733.5,613.7 678.2,615.7" fill="#4b4fe6"/>
<polygon points="679.3,617.5 732.3,519.8 730.3,518.7 677.3,616.3" fill="#74a33b"/>
<polygon points="675.4,520.3 731.3,520.4 731.3,518.1 675.4,518.0" fill="#4b4fe6"/>
<polygon points="676.4,519.7 729.9,422.4 727.9,421.3 674.3,518.6" fill="#74a33b"/>
<polygon points="682.8,728.7 673.3,411.2 671.0,411.3 680.5,728.7" fill="#c4261c"/>
<polygon points="672.3,420.7 728.9,423.0 729.0,420.7 672.4,418.3" fill="#4b4fe6"/>
<polygon points="714.4,726.7 771.9,721.9 771.7,719.5 714.2,724.3" fill="#4b4fe6"/>
<polygon points="773.3,737.3 766.6,406.4 764.1,406.4 770.9,737.3" fill="#c4261c"/>
<polygon points="715.4,726.1 770.8,621.5 768.7,620.3 713.2,724.9" fill="#74a33b"/>
<polygon points="711.6,624.5 769.8,622.1 769.7,619.7 711.5,622.1" fill="#4b4fe6"/>
<polygon points="712.7,623.9 768.7,519.6 766.6,518.4 710.5,622.7" fill="#74a33b"/>
<polygon points="708.8,520.2 767.6,520.2 767.6,517.8 708.8,517.7" fill="#4b4fe6"/>
<polygon points="1272.8,888.5 606.8,663.8 606.2,665.4 1271.3,892.7" fill="#4b4fe6"/>
<polygon points="709.9,519.5 766.6,415.6 764.4,414.4 707.7,518.3" fill="#74a33b"/>
<polygon points="768.6,621.3 811.6,735.1 814.0,734.2 770.9,620.5" fill="#4b4fe6"/>
<polygon points="716.0,742.5 707.0,403.4 704.5,403.5 713.5,742.6" fill="#c4261c"/>
<polygon points="705.9,413.6 765.4,416.2 765.6,413.8 706.0,411.0" fill="#4b4fe6"/>
<polygon points="1278.2,704.4 604.0,592.0 603.7,593.7 1277.4,708.9" fill="#4b4fe6"/>
<polygon points="766.5,519.5 809.8,628.3 812.3,627.4 768.8,518.6" fill="#4b4fe6"/>
<polygon points="1283.7,513.2 601.1,519.3 601.1,521.0 1283.8,517.8" fill="#4b4fe6"/>
<polygon points="1186.8,905.4 563.0,666.2 562.4,667.8 1185.1,909.7" fill="#4b4fe6"/>
<polygon points="764.4,415.5 808.1,519.2 810.5,518.2 766.6,414.5" fill="#4b4fe6"/>
<polygon points="710.4,623.7 751.0,740.6 753.4,739.7 712.7,622.9" fill="#4b4fe6"/>
<polygon points="1289.5,314.5 598.2,445.4 598.5,447.2 1290.4,319.1" fill="#4b4fe6"/>
<polygon points="1190.7,712.9 559.8,593.2 559.5,595.0 1189.8,717.6" fill="#4b4fe6"/>
<polygon points="707.6,519.3 748.5,631.1 751.0,630.2 710.0,518.5" fill="#4b4fe6"/>
<polygon points="1194.6,512.7 556.6,519.2 556.6,521.0 1194.7,517.6" fill="#4b4fe6"/>
<polygon points="752.3,741.5 812.9,735.9 812.7,733.4 752.1,738.8" fill="#4b4fe6"/>
<polygon points="814.4,752.4 808.6,397.9 806.0,397.9 811.8,752.4" fill="#c4261c"/>
<polygon points="704.8,412.7 745.9,519.1 748.4,518.1 707.2,411.8" fill="#4b4fe6"/>
<polygon points="753.4,740.8 812.2,628.5 809.9,627.3 751.0,739.5" fill="#74a33b"/>
<polygon points="1198.8,304.2 553.2,444.1 553.6,445.8 1199.8,309.1" fill="#4b4fe6"/>
<polygon points="749.8,632.0 811.1,629.2 811.0,626.6 749.7,629.3" fill="#4b4fe6"/>
<polygon points="750.9,631.3 810.4,519.3 808.1,518.1 748.5,630.0" fill="#74a33b"/>
<polygon points="747.2,520.0 809.3,520.0 809.3,517.4 747.2,517.3" fill="#4b4fe6"/>
<polygon points="748.4,519.3 808.6,407.8 806.3,406.5 746.0,518.0" fill="#74a33b"/>
<polygon points="753.9,758.3 745.7,394.5 743.0,394.6 751.3,758.4" fill="#c4261c"/>
<polygon points="744.5,405.4 807.4,408.5 807.5,405.8 744.7,402.7" fill="#4b4fe6"/>
<polygon points="796.2,758.5 860.2,752.0 859.9,749.3 795.9,755.7" fill="#4b4fe6"/>
<polygon points="861.6,769.7 857.3,388.1 854.4,388.1 858.9,769.7" fill="#c4261c"/>
<polygon points="797.3,757.7 859.9,636.5 857.5,635.3 794.8,756.4" fill="#74a33b"/>
<polygon points="794.0,640.6 858.8,637.3 858.6,634.5 793.8,637.7" fill="#4b4fe6"/>
<polygon points="793.0,519.0 857.2,398.7 854.7,397.4 790.4,517.6" fill="#74a33b"/>
<polygon points="857.4,636.4 913.6,769.9 916.4,768.7 860.0,635.4" fill="#4b4fe6"/>
<polygon points="797.8,776.6 790.7,384.1 787.8,384.2 795.0,776.7" fill="#c4261c"/>
<polygon points="789.4,395.9 855.9,399.5 856.0,396.6 789.5,392.9" fill="#4b4fe6"/>
<polygon points="792.5,639.6 845.8,777.4 848.7,776.3 795.2,638.6" fill="#4b4fe6"/>
<polygon points="790.3,518.8 844.2,649.7 847.0,648.5 793.0,517.7" fill="#4b4fe6"/>
<polygon points="847.4,778.4 915.1,770.8 914.8,767.8 847.1,775.3" fill="#4b4fe6"/>
<polygon points="848.6,777.5 915.6,646.0 912.9,644.6 845.9,776.1" fill="#74a33b"/>
<polygon points="845.7,650.6 914.3,646.8 914.2,643.8 845.5,647.5" fill="#4b4fe6"/>
<polygon points="842.1,384.7 912.6,389.0 912.8,385.9 842.3,381.5" fill="#4b4fe6"/>
<polygon points="908.1,801.9 979.9,792.9 979.5,789.7 907.7,798.6" fill="#4b4fe6"/>
<polygon points="981.4,813.7 981.7,363.0 978.3,363.0 978.1,813.7" fill="#c4261c"/>
<polygon points="909.4,801.0 981.3,657.1 978.4,655.6 906.4,799.5" fill="#74a33b"/>
<polygon points="907.1,662.6 979.9,658.0 979.7,654.7 906.9,659.2" fill="#4b4fe6"/>
<polygon points="908.5,661.6 981.4,518.3 978.4,516.8 905.5,660.1" fill="#74a33b"/>
<polygon points="978.4,657.1 1055.6,818.4 1058.8,816.8 981.3,655.6" fill="#4b4fe6"/>
<polygon points="904.9,371.4 979.9,376.5 980.2,373.1 905.2,367.9" fill="#4b4fe6"/>
<polygon points="978.5,518.3 1056.9,670.5 1060.1,668.8 981.4,516.8" fill="#4b4fe6"/>
<polygon points="978.6,375.6 1058.2,517.9 1061.4,516.1 981.5,374.0" fill="#4b4fe6"/>
<polygon points="905.4,661.5 979.2,829.2 982.6,827.7 908.6,660.2" fill="#4b4fe6"/>
<polygon points="981.2,830.3 1057.5,819.4 1057.0,815.8 980.7,826.6" fill="#4b4fe6"/>
<polygon points="1058.8,842.1 1063.2,346.6 1059.4,346.5 1055.2,842.1" fill="#c4261c"/>
<polygon points="903.5,370.5 979.5,517.7 982.9,515.9 906.6,368.9" fill="#4b4fe6"/>
<polygon points="982.6,829.2 1060.1,670.4 1056.9,668.8 979.3,827.6" fill="#74a33b"/>
<polygon points="981.2,677.0 1058.6,671.4 1058.4,667.8 980.9,673.2" fill="#4b4fe6"/>
<polygon points="982.7,675.9 1061.5,517.8 1058.2,516.2 979.4,674.2" fill="#74a33b"/>
<polygon points="981.2,518.7 1059.8,518.9 1059.8,515.2 981.2,514.9" fill="#4b4fe6"/>
<polygon points="982.9,517.7 1062.9,360.5 1059.5,358.8 979.5,515.9" fill="#74a33b"/>
<polygon points="982.8,853.8 983.3,339.7 979.4,339.7 979.1,853.8" fill="#c4261c"/>
<polygon points="981.2,355.3 1061.0,361.5 1061.3,357.8 981.5,351.4" fill="#4b4fe6"/>
<polygon points="1070.8,865.0 1151.8,851.6 1151.2,847.7 1070.1,860.9" fill="#4b4fe6"/>
<polygon points="1153.0,876.7 1163.3,326.4 1159.1,326.3 1149.0,876.6" fill="#c4261c"/>
<polygon points="1072.3,863.9 1156.3,686.7 1152.7,685.0 1068.6,862.1" fill="#74a33b"/>
<polygon points="1072.3,694.7 1154.7,687.8 1154.4,683.8 1072.0,690.5" fill="#4b4fe6"/>
<polygon points="1074.1,693.5 1159.5,517.3 1155.8,515.5 1070.3,691.7" fill="#74a33b"/>
<polygon points="1073.9,518.2 1157.7,518.4 1157.7,514.3 1074.0,514.0" fill="#4b4fe6"/>
<polygon points="1075.9,517.0 1162.8,341.9 1159.0,340.0 1072.0,515.1" fill="#74a33b"/>
<polygon points="1152.8,686.8 1266.8,890.5 1270.7,888.4 1156.3,684.8" fill="#4b4fe6"/>
<polygon points="1072.2,891.1 1078.1,317.9 1073.8,317.8 1068.1,891.0" fill="#c4261c"/>
<polygon points="1075.6,335.3 1160.7,343.0 1161.1,338.9 1076.0,330.9" fill="#4b4fe6"/>
<polygon points="1155.9,517.4 1272.5,707.2 1276.3,704.9 1159.4,515.3" fill="#4b4fe6"/>
<polygon points="1159.2,342.1 1278.4,516.8 1282.2,514.2 1162.6,339.8" fill="#4b4fe6"/>
<polygon points="1070.3,693.6 1180.7,907.4 1184.8,905.2 1074.0,691.6" fill="#4b4fe6"/>
<polygon points="1072.1,517.1 1184.9,715.8 1189.0,713.5 1075.8,515.0" fill="#4b4fe6"/>
<polygon points="1183.2,908.6 1269.2,891.6 1268.3,887.3 1182.3,904.0" fill="#4b4fe6"/>
<polygon points="1270.0,919.7 1289.2,301.0 1284.5,300.8 1265.6,919.6" fill="#c4261c"/>
<polygon points="1074.0,334.3 1189.3,516.5 1193.4,513.9 1077.6,331.9" fill="#4b4fe6"/>
<polygon points="1184.9,907.3 1276.5,707.0 1272.3,705.1 1180.7,905.4" fill="#74a33b"/>
<polygon points="1187.2,717.0 1274.6,708.3 1274.2,703.8 1186.7,712.3" fill="#4b4fe6"/>
<polygon points="1189.1,715.7 1282.4,516.5 1278.2,514.6 1184.8,713.7" fill="#74a33b"/>
<polygon points="1191.3,517.6 1280.3,517.8 1280.3,513.2 1191.3,512.8" fill="#4b4fe6"/>
<polygon points="1193.5,516.2 1288.5,318.5 1284.2,316.4 1189.2,514.1" fill="#74a33b"/>
<polygon points="1184.4,937.9 1198.7,290.1 1193.8,290.0 1179.8,937.8" fill="#c4261c"/>
<polygon points="1195.6,309.8 1286.1,319.8 1286.6,315.1 1196.2,304.9" fill="#4b4fe6"/>
<g>
<circle cx="871.6" cy="535.8" r="42.5" fill="url(#silverg)"/>
<circle cx="871.6" cy="535.8" r="42.5" fill="url(#silverr)"/>
<ellipse cx="872.5" cy="506" rx="12.5" ry="9" fill="#ffffff" filter="url(#blur1)"/>
</g>
<polygon points="855.6,490.0 855.9,515.0 858.7,515.0 858.4,490.0" fill="#c4261c"/>
<polygon points="856.3,552.0 856.7,581.0 859.5,581.0 859.1,552.0" fill="#c4261c"/>
<polygon points="795.2,639.8 858.6,519.1 856.1,517.7 792.6,638.4" fill="#74a33b"/>
<polygon points="791.7,519.7 857.3,519.8 857.3,517.0 791.7,516.8" fill="#4b4fe6"/>
<polygon points="856.0,519.0 912.9,645.9 915.6,644.7 858.6,517.8" fill="#4b4fe6"/>
<polygon points="854.6,398.7 912.1,518.7 914.9,517.4 857.2,397.4" fill="#4b4fe6"/>
<polygon points="916.6,789.9 914.2,376.6 911.1,376.6 913.6,789.9" fill="#c4261c"/>
<polygon points="788.1,395.0 842.5,518.5 845.3,517.2 790.8,393.8" fill="#4b4fe6"/>
<polygon points="847.0,649.8 914.8,518.7 912.1,517.3 844.2,648.3" fill="#74a33b"/>
<polygon points="843.9,519.4 913.5,519.6 913.5,516.5 843.9,516.3" fill="#4b4fe6"/>
<polygon points="845.3,518.6 914.1,388.2 911.3,386.7 842.5,517.1" fill="#74a33b"/>
<polygon points="849.1,798.0 843.6,371.9 840.4,372.0 846.0,798.0" fill="#c4261c"/>
<polygon points="906.0,519.1 979.9,519.2 979.9,515.9 906.0,515.7" fill="#4b4fe6"/>
<polygon points="907.6,518.2 981.5,375.6 978.5,374.0 904.5,516.6" fill="#74a33b"/>
<polygon points="909.8,823.3 906.7,357.4 903.2,357.4 906.4,823.3" fill="#c4261c"/>
<polygon points="904.5,518.1 979.4,675.9 982.8,674.3 907.6,516.6" fill="#4b4fe6"/>
<g font-family="Liberation Sans, sans-serif" font-weight="700" text-anchor="middle">
<circle cx="1737.1" cy="279.2" r="12" fill="#e54b45"/>
<circle cx="1763.7" cy="264.7" r="12" fill="#255a92"/>
<circle cx="1804.1" cy="351" r="12" fill="#4a7a2e"/>
<line x1="1804.7" y1="273.8" x2="1804.7" y2="213" stroke="#7ec845" stroke-width="3.6"/>
<line x1="1804.7" y1="273.8" x2="1840" y2="269.6" stroke="#8b2a2a" stroke-width="3.4"/>
<circle cx="1869.2" cy="268.3" r="15.8" fill="#8a2a28"/>
<text x="1869.5" y="276.5" font-size="22" fill="#111">X</text>
<circle cx="1804.1" cy="198.4" r="16.3" fill="#7ec645"/>
<text x="1804.1" y="206.6" font-size="22" fill="#111">Y</text>
<line x1="1804.7" y1="273.8" x2="1834" y2="282.5" stroke="#3d8ae6" stroke-width="3.4"/>
<circle cx="1843.3" cy="282.2" r="15.8" fill="#3f8ceb"/>
<text x="1843.3" y="290.4" font-size="22" fill="#111">Z</text>
</g>
</g>
</svg>
</div>
<div id="gui">
<div style="position:absolute;left:0;top:0;width:490px;height:50px;background:#111"></div>
<svg class="abs" style="left:8px;top:7px" width="18" height="14"><path d="M2 3 L9 10 L16 3" stroke="#ebebeb" stroke-width="3" fill="none"/></svg>
<div class="gt" style="left:35px;top:3.4px;font-size:22px;line-height:22px;color:#ebebeb;font-weight:700;letter-spacing:0.3px;">Scene Controls</div>
<svg class="abs" style="left:11px;top:56px" width="14" height="20"><path d="M3 2 L11 10 L3 18" stroke="#f5a73b" stroke-width="3" fill="none"/></svg>
<div class="gt" style="left:37px;top:55.4px;font-size:22px;line-height:22px;color:#f5a73b;font-weight:700;letter-spacing:0.3px;">Building Geometry</div>
<div style="position:absolute;left:0;top:100px;width:486px;height:46px;border:2px solid #2f7cf6"></div>
<svg class="abs" style="left:9px;top:107px" width="18" height="14"><path d="M2 3 L9 10 L16 3" stroke="#4dc0f8" stroke-width="3" fill="none"/></svg>
<div class="gt" style="left:37px;top:105.4px;font-size:22px;line-height:22px;color:#4dc0f8;font-weight:700;letter-spacing:0.3px;text-shadow:0 0 6px #1e4fd0,0 0 10px #1e3fa0;">Scaffold Details</div>
<div class="gt" style="left:9px;top:167.4px;font-size:22px;line-height:22px;color:#ebebeb;font-weight:400;letter-spacing:0.6px;">Section size</div>
<div class="gt" style="left:9px;top:215.4px;font-size:22px;line-height:22px;color:#ebebeb;font-weight:400;letter-spacing:0.6px;">Clearance above</div>
<div class="gt" style="left:9px;top:263.4px;font-size:22px;line-height:22px;color:#ebebeb;font-weight:400;letter-spacing:0.6px;">Offset horz.</div>
<div class="gt" style="left:9px;top:311.4px;font-size:22px;line-height:22px;color:#ebebeb;font-weight:400;letter-spacing:0.6px;">Longitudinal Spacing (m)</div>
<div class="gt" style="left:9px;top:359.4px;font-size:22px;line-height:22px;color:#ebebeb;font-weight:400;letter-spacing:0.6px;">Transverse Spacing (m)</div>
<div style="position:absolute;left:221px;top:158px;width:190px;height:40px;background:#424242;border-radius:5px"></div>
<div class="gt" style="left:233px;top:167.4px;font-size:22px;line-height:22px;color:#ebebeb;font-weight:400;letter-spacing:0.5px;">CHS48.3x3.2</div>
<svg class="abs" style="left:385px;top:169px" width="14" height="18"><path d="M1.5 7 L7 1.5 L12.5 7 Z M1.5 11 L7 16.5 L12.5 11 Z" fill="#ebebeb"/></svg>
<div style="position:absolute;left:221px;top:206px;width:163px;height:40px;background:#424242;border-radius:5px"></div>
<div style="position:absolute;left:302px;top:206px;width:4px;height:40px;background:#4dc0f8"></div>
<div style="position:absolute;left:392px;top:206px;width:90px;height:40px;background:#424242;border-radius:5px"></div>
<div class="gt" style="left:399px;top:215.4px;font-size:22px;line-height:22px;color:#4dc0f8;font-weight:400;letter-spacing:0.3px;">3</div>
<div style="position:absolute;left:221px;top:254px;width:163px;height:40px;background:#424242;border-radius:5px"></div>
<div style="position:absolute;left:261px;top:254px;width:4px;height:40px;background:#4dc0f8"></div>
<div style="position:absolute;left:392px;top:254px;width:90px;height:40px;background:#424242;border-radius:5px"></div>
<div class="gt" style="left:399px;top:263.4px;font-size:22px;line-height:22px;color:#4dc0f8;font-weight:400;letter-spacing:0.3px;">1.5</div>
<div style="position:absolute;left:278px;top:302px;width:106px;height:40px;background:#424242;border-radius:5px"></div>
<div style="position:absolute;left:329px;top:302px;width:4px;height:40px;background:#4dc0f8"></div>
<div style="position:absolute;left:392px;top:302px;width:90px;height:40px;background:#424242;border-radius:5px"></div>
<div class="gt" style="left:399px;top:311.4px;font-size:22px;line-height:22px;color:#4dc0f8;font-weight:400;letter-spacing:0.3px;">2</div>
<div style="position:absolute;left:264px;top:350px;width:120px;height:40px;background:#424242;border-radius:5px"></div>
<div style="position:absolute;left:276px;top:350px;width:4px;height:40px;background:#4dc0f8"></div>
<div style="position:absolute;left:392px;top:350px;width:90px;height:40px;background:#424242;border-radius:5px"></div>
<div class="gt" style="left:399px;top:359.4px;font-size:22px;line-height:22px;color:#4dc0f8;font-weight:400;letter-spacing:0.3px;">1.2</div>
<div class="gt" style="left:9px;top:407.4px;font-size:22px;line-height:22px;color:#ebebeb;font-weight:400;letter-spacing:0.6px;">Front</div>
<div style="position:absolute;left:221px;top:403px;width:30px;height:30px;background:#424242;border-radius:4px"></div>
<div class="gt" style="left:9px;top:455.4px;font-size:22px;line-height:22px;color:#ebebeb;font-weight:400;letter-spacing:0.6px;">Back</div>
<div style="position:absolute;left:221px;top:451px;width:30px;height:30px;background:#424242;border-radius:4px"></div>
<div class="gt" style="left:9px;top:503.4px;font-size:22px;line-height:22px;color:#ebebeb;font-weight:400;letter-spacing:0.6px;">Left</div>
<div style="position:absolute;left:221px;top:499px;width:30px;height:30px;background:#424242;border-radius:4px"></div>
<svg class="abs" style="left:221px;top:499px" width="30" height="30"><path d="M7 15.5 L12.5 21 L23 9.5" stroke="#ebebeb" stroke-width="3.5" fill="none"/></svg>
<div class="gt" style="left:9px;top:551.4px;font-size:22px;line-height:22px;color:#ebebeb;font-weight:400;letter-spacing:0.6px;">Right</div>
<div style="position:absolute;left:221px;top:547px;width:30px;height:30px;background:#424242;border-radius:4px"></div>
<svg class="abs" style="left:221px;top:547px" width="30" height="30"><path d="M7 15.5 L12.5 21 L23 9.5" stroke="#ebebeb" stroke-width="3.5" fill="none"/></svg>
<svg class="abs" style="left:11px;top:597px" width="14" height="20"><path d="M3 2 L11 10 L3 18" stroke="#f5a73b" stroke-width="3" fill="none"/></svg>
<div class="gt" style="left:37px;top:595.4px;font-size:22px;line-height:22px;color:#f5a73b;font-weight:700;letter-spacing:0.3px;">Views Menu</div>
<div style="position:absolute;left:0;top:640px;width:490px;height:2px;background:#2e2e2e"></div>
<div style="position:absolute;left:8px;top:650px;width:474px;height:40px;background:#424242;border-radius:5px"></div>
<div class="gt" style="left:189px;top:660.4px;font-size:22px;line-height:22px;color:#ebebeb;font-weight:400;letter-spacing:0.5px;">Reset view</div>
</div>
<h1>Quantities</h1>
<div id="count">Count in list: 5</div>
<div id="table">
<div class="tc" style="left:25.5px;top:1405.6px;font-size:30px;line-height:30px;font-weight:700;letter-spacing:0px">Item</div>
<div class="tc" style="left:303.5px;top:1405.6px;font-size:30px;line-height:30px;font-weight:700;letter-spacing:0px">No.</div>
<div class="tc" style="left:390.5px;top:1405.6px;font-size:30px;line-height:30px;font-weight:700;letter-spacing:0px">Length (m)</div>
<div class="tc" style="left:637.5px;top:1405.6px;font-size:30px;line-height:30px;font-weight:700;letter-spacing:0px">Function</div>
<div class="tc" style="left:855.5px;top:1405.6px;font-size:30px;line-height:30px;font-weight:700;letter-spacing:0px">Weight (kg)</div>
<div class="tc" style="left:1116.5px;top:1405.6px;font-size:30px;line-height:30px;font-weight:700;letter-spacing:0px">Total length (m)</div>
<div class="tc" style="left:1468.5px;top:1405.6px;font-size:30px;line-height:30px;font-weight:700;letter-spacing:0px">Total weight (t)</div>
<div class="tc" style="left:25.5px;top:1454.6px;font-size:30px;line-height:30px;font-weight:400;letter-spacing:-0.5px">CHS48.3x3.2</div>
<div class="tc" style="left:303.5px;top:1454.6px;font-size:30px;line-height:30px;font-weight:400;letter-spacing:-0.5px">112</div>
<div class="tc" style="left:390.5px;top:1454.6px;font-size:30px;line-height:30px;font-weight:400;letter-spacing:-0.5px">1.297</div>
<div class="tc" style="left:637.5px;top:1454.6px;font-size:30px;line-height:30px;font-weight:400;letter-spacing:-0.5px">Horizontal</div>
<div class="tc" style="left:855.5px;top:1454.6px;font-size:30px;line-height:30px;font-weight:400;letter-spacing:-0.5px">4.617</div>
<div class="tc" style="left:1116.5px;top:1454.6px;font-size:30px;line-height:30px;font-weight:400;letter-spacing:-0.5px">145.264</div>
<div class="tc" style="left:1468.5px;top:1454.6px;font-size:30px;line-height:30px;font-weight:400;letter-spacing:-0.5px">0.517</div>
<div class="tc" style="left:25.5px;top:1504.6px;font-size:30px;line-height:30px;font-weight:400;letter-spacing:-0.5px">CHS48.3x3.2</div>
<div class="tc" style="left:303.5px;top:1504.6px;font-size:30px;line-height:30px;font-weight:400;letter-spacing:-0.5px">84</div>
<div class="tc" style="left:390.5px;top:1504.6px;font-size:30px;line-height:30px;font-weight:400;letter-spacing:-0.5px">2.332</div>
<div class="tc" style="left:637.5px;top:1504.6px;font-size:30px;line-height:30px;font-weight:400;letter-spacing:-0.5px">Diagonal</div>
<div class="tc" style="left:855.5px;top:1504.6px;font-size:30px;line-height:30px;font-weight:400;letter-spacing:-0.5px">8.305</div>
<div class="tc" style="left:1116.5px;top:1504.6px;font-size:30px;line-height:30px;font-weight:400;letter-spacing:-0.5px">195.888</div>
<div class="tc" style="left:1468.5px;top:1504.6px;font-size:30px;line-height:30px;font-weight:400;letter-spacing:-0.5px">0.698</div>
<div class="tc" style="left:25.5px;top:1554.6px;font-size:30px;line-height:30px;font-weight:400;letter-spacing:-0.5px">CHS48.3x3.2</div>
<div class="tc" style="left:303.5px;top:1554.6px;font-size:30px;line-height:30px;font-weight:400;letter-spacing:-0.5px">84</div>
<div class="tc" style="left:390.5px;top:1554.6px;font-size:30px;line-height:30px;font-weight:400;letter-spacing:-0.5px">2.925</div>
<div class="tc" style="left:637.5px;top:1554.6px;font-size:30px;line-height:30px;font-weight:400;letter-spacing:-0.5px">Diagonal</div>
<div class="tc" style="left:855.5px;top:1554.6px;font-size:30px;line-height:30px;font-weight:400;letter-spacing:-0.5px">10.415</div>
<div class="tc" style="left:1116.5px;top:1554.6px;font-size:30px;line-height:30px;font-weight:400;letter-spacing:-0.5px">245.700</div>
<div class="tc" style="left:1468.5px;top:1554.6px;font-size:30px;line-height:30px;font-weight:400;letter-spacing:-0.5px">0.875</div>
<div class="tc" style="left:25.5px;top:1604.6px;font-size:30px;line-height:30px;font-weight:400;letter-spacing:-0.5px">CHS48.3x3.2</div>
<div class="tc" style="left:303.5px;top:1604.6px;font-size:30px;line-height:30px;font-weight:400;letter-spacing:-0.5px">140</div>
<div class="tc" style="left:390.5px;top:1604.6px;font-size:30px;line-height:30px;font-weight:400;letter-spacing:-0.5px">6.500</div>
<div class="tc" style="left:637.5px;top:1604.6px;font-size:30px;line-height:30px;font-weight:400;letter-spacing:-0.5px">Vertical</div>
<div class="tc" style="left:855.5px;top:1604.6px;font-size:30px;line-height:30px;font-weight:400;letter-spacing:-0.5px">23.144</div>
<div class="tc" style="left:1116.5px;top:1604.6px;font-size:30px;line-height:30px;font-weight:400;letter-spacing:-0.5px">910.000</div>
<div class="tc" style="left:1468.5px;top:1604.6px;font-size:30px;line-height:30px;font-weight:400;letter-spacing:-0.5px">3.240</div>
<div class="tc" style="left:25.5px;top:1653.6px;font-size:30px;line-height:30px;font-weight:400;letter-spacing:-0.5px">CHS48.3x3.2</div>
<div class="tc" style="left:303.5px;top:1653.6px;font-size:30px;line-height:30px;font-weight:400;letter-spacing:-0.5px">16</div>
<div class="tc" style="left:390.5px;top:1653.6px;font-size:30px;line-height:30px;font-weight:400;letter-spacing:-0.5px">26.097</div>
<div class="tc" style="left:637.5px;top:1653.6px;font-size:30px;line-height:30px;font-weight:400;letter-spacing:-0.5px">Horizontal</div>
<div class="tc" style="left:855.5px;top:1653.6px;font-size:30px;line-height:30px;font-weight:400;letter-spacing:-0.5px">92.919</div>
<div class="tc" style="left:1116.5px;top:1653.6px;font-size:30px;line-height:30px;font-weight:400;letter-spacing:-0.5px">417.552</div>
<div class="tc" style="left:1468.5px;top:1653.6px;font-size:30px;line-height:30px;font-weight:400;letter-spacing:-0.5px">1.487</div>
<div class="tc" style="left:25.5px;top:1703.6px;font-size:30px;line-height:30px;font-weight:400;letter-spacing:-0.5px">Totals</div>
<div class="tc" style="left:1116.5px;top:1703.6px;font-size:30px;line-height:30px;font-weight:400;letter-spacing:-0.5px">1914.404</div>
<div class="tc" style="left:1468.5px;top:1703.6px;font-size:30px;line-height:30px;font-weight:400;letter-spacing:-0.5px">6.817</div>
</div>
</body></html>
